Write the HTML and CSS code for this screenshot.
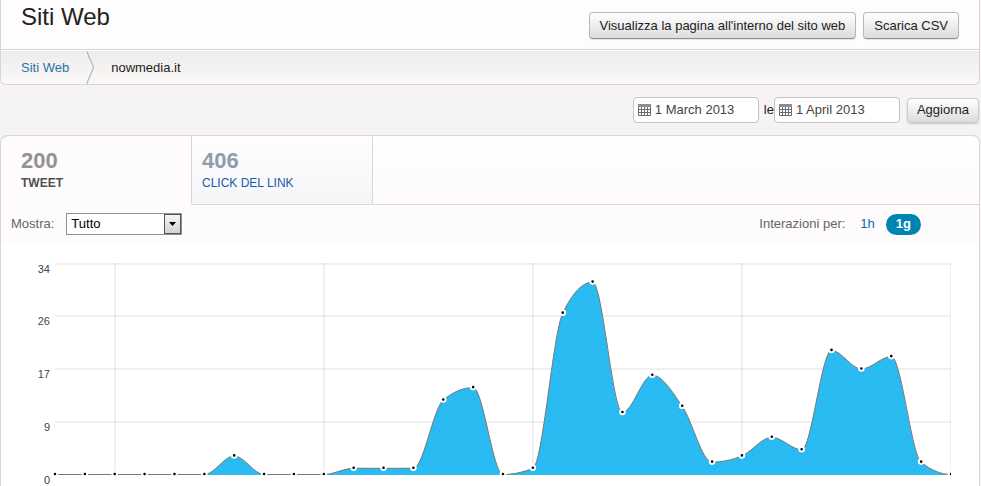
FILE: index.html
```
<!DOCTYPE html>
<html lang="it">
<head>
    <meta charset="UTF-8">
    <meta name="viewport" content="width=device-width, initial-scale=1.0">
    <title>Siti Web</title>
    <link rel="stylesheet" href="styles.css">
</head>
<body>
    <header class="panel-header">
        <div class="title-bar">
            <h1>Siti Web</h1>
            <div class="actions">
                <button type="button" class="btn">Visualizza la pagina all'interno del sito web</button>
                <button type="button" class="btn">Scarica CSV</button>
            </div>
        </div>
        <nav class="breadcrumb">
            <a href="#">Siti Web</a>
            <svg class="chevron" width="10" height="33" viewBox="0 0 10 33" fill="none">
                <path d="M1.500 0 L8.500 16.500 L1.500 33" stroke="#b4b8ba" stroke-width="1.300"/>
                <path d="M0 0 L7 16.500 L0 33" stroke="#fff" stroke-width="1" opacity="0.600"/>
            </svg>
            <span>nowmedia.it</span>
        </nav>
    </header>

    <form class="dates">
        <label class="date-box" for="from-date">
            <svg class="calendar" width="13" height="12" viewBox="0 0 13 12">
                <rect x="0" y="0" width="13" height="12" rx="1" fill="#6a6a6a"/>
                <rect x="0" y="0" width="13" height="3" rx="1" fill="#8d8d8d"/>
                <path d="M1 3h2v2H1zM4 3h2v2H4zM7 3h2v2H7zM10 3h2v2h-2zM1 6h2v2H1zM4 6h2v2H4zM7 6h2v2H7zM10 6h2v2h-2zM1 9h2v2H1zM4 9h2v2H4zM7 9h2v2H7zM10 9h2v2h-2z" fill="#fff"/>
            </svg>
            <input type="text" id="from-date" value="1 March 2013">
        </label>
        <span class="sep">le</span>
        <label class="date-box" for="to-date">
            <svg class="calendar" width="13" height="12" viewBox="0 0 13 12">
                <rect x="0" y="0" width="13" height="12" rx="1" fill="#6a6a6a"/>
                <rect x="0" y="0" width="13" height="3" rx="1" fill="#8d8d8d"/>
                <path d="M1 3h2v2H1zM4 3h2v2H4zM7 3h2v2H7zM10 3h2v2h-2zM1 6h2v2H1zM4 6h2v2H4zM7 6h2v2H7zM10 6h2v2h-2zM1 9h2v2H1zM4 9h2v2H4zM7 9h2v2H7zM10 9h2v2h-2z" fill="#fff"/>
            </svg>
            <input type="text" id="to-date" value="1 April 2013">
        </label>
        <button type="button" class="btn btn-light">Aggiorna</button>
    </form>

    <main class="card">
        <div class="tabs">
            <a href="#" class="tab active">
                <strong>200</strong>
                <span>TWEET</span>
            </a>
            <a href="#" class="tab">
                <strong>406</strong>
                <span>CLICK DEL LINK</span>
            </a>
            <div class="tabs-rest"></div>
        </div>
        <div class="toolbar">
            <label for="show">Mostra:</label>
            <div class="select-box">
                <select id="show">
                    <option>Tutto</option>
                </select>
                <svg class="arrow" width="7" height="4" viewBox="0 0 7 4">
                    <path d="M0 0h7L3.500 4z" fill="#000"/>
                </svg>
            </div>
            <div class="interval">
                <span>Interazioni per:</span>
                <button type="button" class="step">1h</button>
                <button type="button" class="step selected">1g</button>
            </div>
        </div>
        <svg id="chart" class="chart"></svg>
    </main>

    <script src="chart.js"></script>
</body>
</html>
```
FILE: styles.css
```
* {
    margin: 0;
    padding: 0;
    box-sizing: border-box;
}

body {
    font-family: "Liberation Sans", Arial, sans-serif;
    font-size: 13px;
    line-height: 16px;
    color: #222;
    background-color: #f5f3f4;
    min-height: 100vh;
    padding-right: 1px;
    display: flex;
    flex-direction: column;
}

button,
input,
select {
    font: inherit;
    color: inherit;
}

a {
    text-decoration: none;
}

.panel-header {
    border: 1px solid #d9d4d5;
    border-top: none;
    border-radius: 0 0 6px 6px;
    overflow: hidden;
}

.title-bar {
    display: flex;
    justify-content: space-between;
    height: 50px;
    padding: 3px 20px 0;
    background-color: #fefcfd;
    border-bottom: 1px solid #d3d5d5;
}

h1 {
    font-size: 24px;
    font-weight: normal;
    line-height: 28px;
}

.actions {
    display: flex;
    gap: 7px;
    padding-top: 9px;
}

.btn {
    height: 27px;
    padding: 0 9px;
    border: 1px solid #b8b8b8;
    border-bottom-color: #8f8f8f;
    border-radius: 4px;
    background: linear-gradient(#fff, #dcdcdc);
    box-shadow: 0 1px 1px rgba(0, 0, 0, 0.1);
    white-space: nowrap;
    cursor: pointer;
}

.actions .btn {
    padding: 0 10px;
}

.btn-light {
    height: 25px;
    border-color: #ccc;
    box-shadow: 0 1px 2px rgba(0, 0, 0, 0.2);
}

.breadcrumb {
    display: flex;
    align-items: center;
    height: 34px;
    padding-left: 20px;
    border-top: 1px solid #fff;
    background: linear-gradient(#efedec, #faf7f7);
}

.breadcrumb a {
    color: #1f75a8;
}

.chevron {
    margin: 0 16px;
}

.dates {
    display: flex;
    justify-content: flex-end;
    align-items: center;
    padding: 12px 1px 12px 0;
}

.date-box {
    display: flex;
    align-items: center;
    gap: 4px;
    width: 126px;
    height: 26px;
    padding: 0 4px;
    border: 1px solid #c4c4c4;
    border-radius: 4px;
    background-color: #fff;
}

.date-box input {
    flex: 1;
    min-width: 0;
    border: none;
    outline: none;
    background: none;
    color: #444;
}

.sep {
    margin-left: 5px;
}

.dates .btn {
    margin-left: 7px;
}

.card {
    flex: 1;
    border: 1px solid #dcd6d8;
    border-bottom: none;
    border-radius: 7px 7px 0 0;
    background-color: #fff;
}

.tabs {
    display: flex;
    height: 70px;
    margin-top: -1px;
}

.tab {
    width: 181px;
    padding: 13px 10px 0;
    border-top: 1px solid #dcd6d8;
    border-right: 1px solid #dcd6d8;
    border-bottom: 1px solid #dcd6d8;
    background: linear-gradient(#fefcfd 20%, #f3f6f8);
}

.tab strong,
.tab span {
    display: block;
}

.tab strong {
    font-size: 22px;
    line-height: 24px;
    color: #8c9daf;
}

.tab span {
    font-size: 12px;
    line-height: 21px;
    color: #1a5aa8;
}

.tab.active {
    width: 191px;
    padding-left: 20px;
    border-top-color: #9db9cc;
    border-bottom-color: #fdfbfc;
    border-top-left-radius: 7px;
    background: #fdfbfc;
}

.tab.active strong {
    color: #929292;
}

.tab.active span {
    color: #505050;
    font-weight: bold;
}

.tabs-rest {
    flex: 1;
    border-top: 1px solid #dcd6d8;
    border-bottom: 1px solid #dcd6d8;
    border-top-right-radius: 7px;
    background: linear-gradient(#fff, #fdfbfc);
}

.toolbar {
    display: flex;
    align-items: center;
    height: 38px;
    padding: 0 58px 0 10px;
    background-color: #fdfbfc;
    color: #666;
}

.select-box {
    position: relative;
    margin-left: 12px;
}

.select-box select {
    display: block;
    appearance: none;
    width: 116px;
    height: 22px;
    padding-left: 4px;
    border: 1px solid #8e9094;
    border-radius: 0;
    background-color: #fff;
    color: #000;
}

.select-box::after {
    content: "";
    position: absolute;
    top: 1px;
    right: 1px;
    width: 17px;
    height: 20px;
    box-sizing: border-box;
    border: 1px solid #555;
    background: linear-gradient(#f6f6f6, #d2d2d2);
    pointer-events: none;
}

.arrow {
    position: absolute;
    top: 9px;
    right: 6px;
    z-index: 1;
    pointer-events: none;
}

.interval {
    display: flex;
    align-items: center;
    margin-left: auto;
}

.step {
    height: 21px;
    padding: 0 10px;
    border: none;
    border-radius: 11px;
    background: none;
    color: #1a62b0;
    cursor: pointer;
}

.interval span {
    margin-right: 5px;
}

.step.selected {
    margin-left: 1px;
    background-color: #0084b4;
    color: #fff;
    font-weight: bold;
}

.chart {
    display: block;
    width: 100%;
    height: 243px;
}

/* the last axis label sits on the window's lower edge */
.card {
    overflow: hidden;
    margin-bottom: -1px;
}

.grid {
    fill: #000;
    opacity: 0.06;
}

.area {
    fill: url(#dots);
}

.line {
    fill: none;
    stroke: #777;
    stroke-width: 1px;
}

.point {
    fill: #000;
    stroke: #fff;
    stroke-width: 2px;
}

.axis {
    font-size: 11px;
    text-anchor: end;
    fill: #444;
}
```
FILE: chart.js
```
// tweets per day, 1 March - 31 March
const values = [0, 0, 0, 0, 0, 0, 3, 0, 0, 0, 1, 1, 1, 12, 14, 0, 1, 26, 31, 10, 16, 11, 2, 3, 6, 4, 20, 17, 19, 2, 0];
const labels = [34, 26, 17, 9, 0];
const chart = document.getElementById("chart");
const left = 54, rightPad = 28, plotTop = 20, bottom = 231;

// tangent that never overshoots the neighbouring points
function slope(i) {
    if (i === 0 || i === values.length - 1) return 0;
    const a = values[i] - values[i - 1];
    const b = values[i + 1] - values[i];
    if (a * b <= 0) return 0;
    return Math.sign(a) * Math.min(Math.abs(a), Math.abs(b), Math.abs(a + b) / 4) * 2;
}

function draw() {
    const right = chart.clientWidth - rightPad;
    const step = (right - left) / (values.length - 1);
    const unit = (bottom - plotTop) / 34;
    const x = i => left + i * step;
    // half a pixel down keeps the zero line sharp
    const y = v => bottom + 0.5 - v * unit;

    let path = `M${x(0)} ${y(values[0])}`;
    for (let i = 1; i < values.length; i++) {
        path += `C${x(i - 1) + step / 3} ${y(values[i - 1] + slope(i - 1) / 3)} ` +
            `${x(i) - step / 3} ${y(values[i] - slope(i) / 3)} ${x(i)} ${y(values[i])}`;
    }

    let out = `<defs>
        <pattern id="dots" width="10" height="10" patternUnits="userSpaceOnUse">
            <rect width="10" height="10" fill="#2abbf3"/>
            <path d="M1 1h1v1h-1zM6 3h1v1h-1zM3 6h1v1h-1zM8 8h1v1h-1z" fill="#1fb0e8"/>
        </pattern>
        <clipPath id="plot"><rect x="0" y="0" width="${right}" height="243"/></clipPath>
    </defs>`;

    labels.forEach((label, i) => {
        const ly = Math.floor(plotTop + i * (bottom - plotTop) / 4);
        if (i < 4) out += `<rect class="grid" x="${left}" y="${ly}" width="${right - left}" height="2"/>`;
        out += `<text class="axis" x="${left - 5}" y="${ly + 10}">${label}</text>`;
    });
    for (let i = 2; i < values.length; i += 7) {
        const gx = Math.min(Math.floor(x(i)), right - 1);
        out += `<rect class="grid" x="${gx}" y="${plotTop}" width="2" height="${bottom - plotTop}" clip-path="url(#plot)"/>`;
    }

    out += `<path class="area" d="${path}V${bottom + 1}H${left}Z"/><path class="line" d="${path}"/>`;
    out += `<g clip-path="url(#plot)">`;
    values.forEach((v, i) => {
        out += `<circle class="point" cx="${x(i)}" cy="${y(v) - 0.5}" r="2.300"/>`;
    });
    chart.innerHTML = out + "</g>";
}

draw();
window.addEventListener("resize", draw);
```
